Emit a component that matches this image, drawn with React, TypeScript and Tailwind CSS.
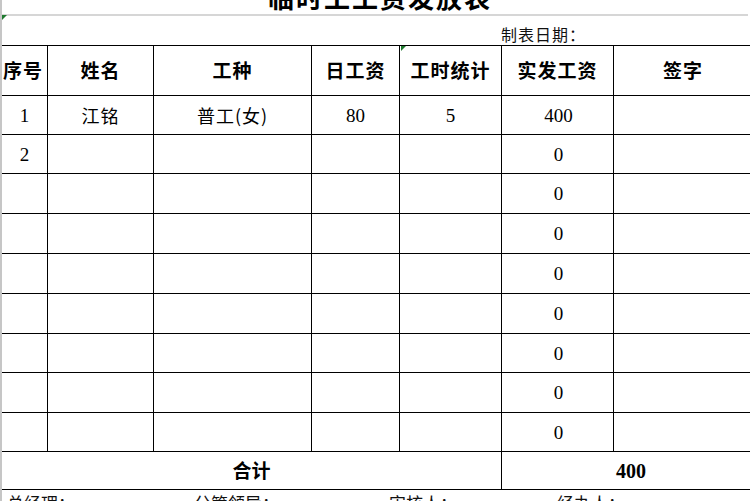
import React from "react";

const cols = "grid-cols-[46px_106px_158px_88px_102px_112px_146px]";
const cjk = "font-['Noto_Sans_CJK_SC',sans-serif]";
const serif = "font-['Liberation_Serif','Noto_Sans_CJK_SC',serif]";

const heads = ["序号", "姓名", "工种", "日工资", "工时统计", "实发工资", "签字"];
const rowHeights = ["h-[39px]", "h-[39px]", "h-[40px]", "h-[40px]", "h-[40px]", "h-[40px]", "h-[39px]", "h-[40px]", "h-[39px]"];

type Row = { no: string; name: string; type: string; day: string; hours: string; pay: string };
const rows: Row[] = [
  { no: "1", name: "江铭", type: "普工(女)", day: "80", hours: "5", pay: "400" },
  { no: "2", name: "", type: "", day: "", hours: "", pay: "0" },
  ...Array.from({ length: 7 }, () => ({ no: "", name: "", type: "", day: "", hours: "", pay: "0" })),
];

function Cell({ children, h, last, className = "" }: { children?: React.ReactNode; h: string; last?: boolean; className?: string }) {
  return (
    <div className={`${h} flex items-center justify-center border-b border-[#000] ${last ? "" : "border-r"} ${className}`}>
      {children}
    </div>
  );
}

export default function App() {
  return (
    <div className="w-[750px] h-[501px] overflow-hidden bg-white text-black border-l-2 border-[#c6c6c6]">
      <div className="w-[760px]">
        {/* title */}
        <div className="relative h-[14px] overflow-hidden flex justify-center">
          <div className={`${cjk} text-[26px] font-bold leading-none tracking-[2px] mt-[-16px] pr-[4px]`}>临时工工资发放表</div>
        </div>
        <div className="h-[2px] w-[746px] bg-[#d6d6d6]" />
        <div className="relative h-[29px] flex items-end">
          <div className="absolute left-[0px] top-[-1px] w-0 h-0 border-t-[5px] border-r-[5px] border-t-[#1e7a2e] border-r-transparent" />
          <div className={`${cjk} text-[16px] leading-none ml-[499px] mb-[3px] tracking-[1px] text-[#111]`}>制表日期：</div>
        </div>
        {/* table */}
        <div className={`grid ${cols} border-t border-[#000] relative`}>
          <div className="absolute left-[399px] top-0 w-0 h-0 border-t-[5px] border-r-[5px] border-t-[#1e7a2e] border-r-transparent" />
          {heads.map((h, i) => (
            <Cell key={h} h="h-[50px]" last={i === 6} className={`${cjk} text-[19px] font-bold tracking-[1px] ${i === 0 ? "justify-start pl-[1px] tracking-[0px]" : ""} ${i === 6 ? "pr-[8px]" : ""}`}>
              {h}
            </Cell>
          ))}
          {rows.map((r, ri) => {
            const h = rowHeights[ri];
            return (
              <React.Fragment key={ri}>
                <Cell h={h} className={`${serif} text-[19px] pt-[2px]`}>{r.no}</Cell>
                <Cell h={h} className={`${cjk} text-[18px] tracking-[1px]`}>{r.name}</Cell>
                <Cell h={h} className={`${cjk} text-[18px] tracking-[1px]`}>{r.type}</Cell>
                <Cell h={h} className={`${serif} text-[19px] pt-[2px]`}>{r.day}</Cell>
                <Cell h={h} className={`${serif} text-[19px] pt-[2px]`}>{r.hours}</Cell>
                <Cell h={h} className={`${serif} text-[19px] pt-[2px] pl-[2px]`}>{r.pay}</Cell>
                <Cell h={h} last />
              </React.Fragment>
            );
          })}
          <div className={`col-span-5 h-[38px] flex items-center justify-center border-b border-r border-[#000] ${cjk} text-[19px] font-bold`}>合计</div>
          <div className={`col-span-2 h-[38px] flex items-center justify-center border-b border-[#000] ${serif} text-[20px] font-bold`}>400</div>
        </div>
        <div className={`flex ${cjk} text-[17px] leading-none pt-[4px] text-[#111]`}>
          <div className="w-[192px] pl-[5px]">总经理：</div>
          <div className="w-[195px]">分管领导：</div>
          <div className="w-[168px]">审核人：</div>
          <div>经办人：</div>
        </div>
      </div>
    </div>
  );
}
